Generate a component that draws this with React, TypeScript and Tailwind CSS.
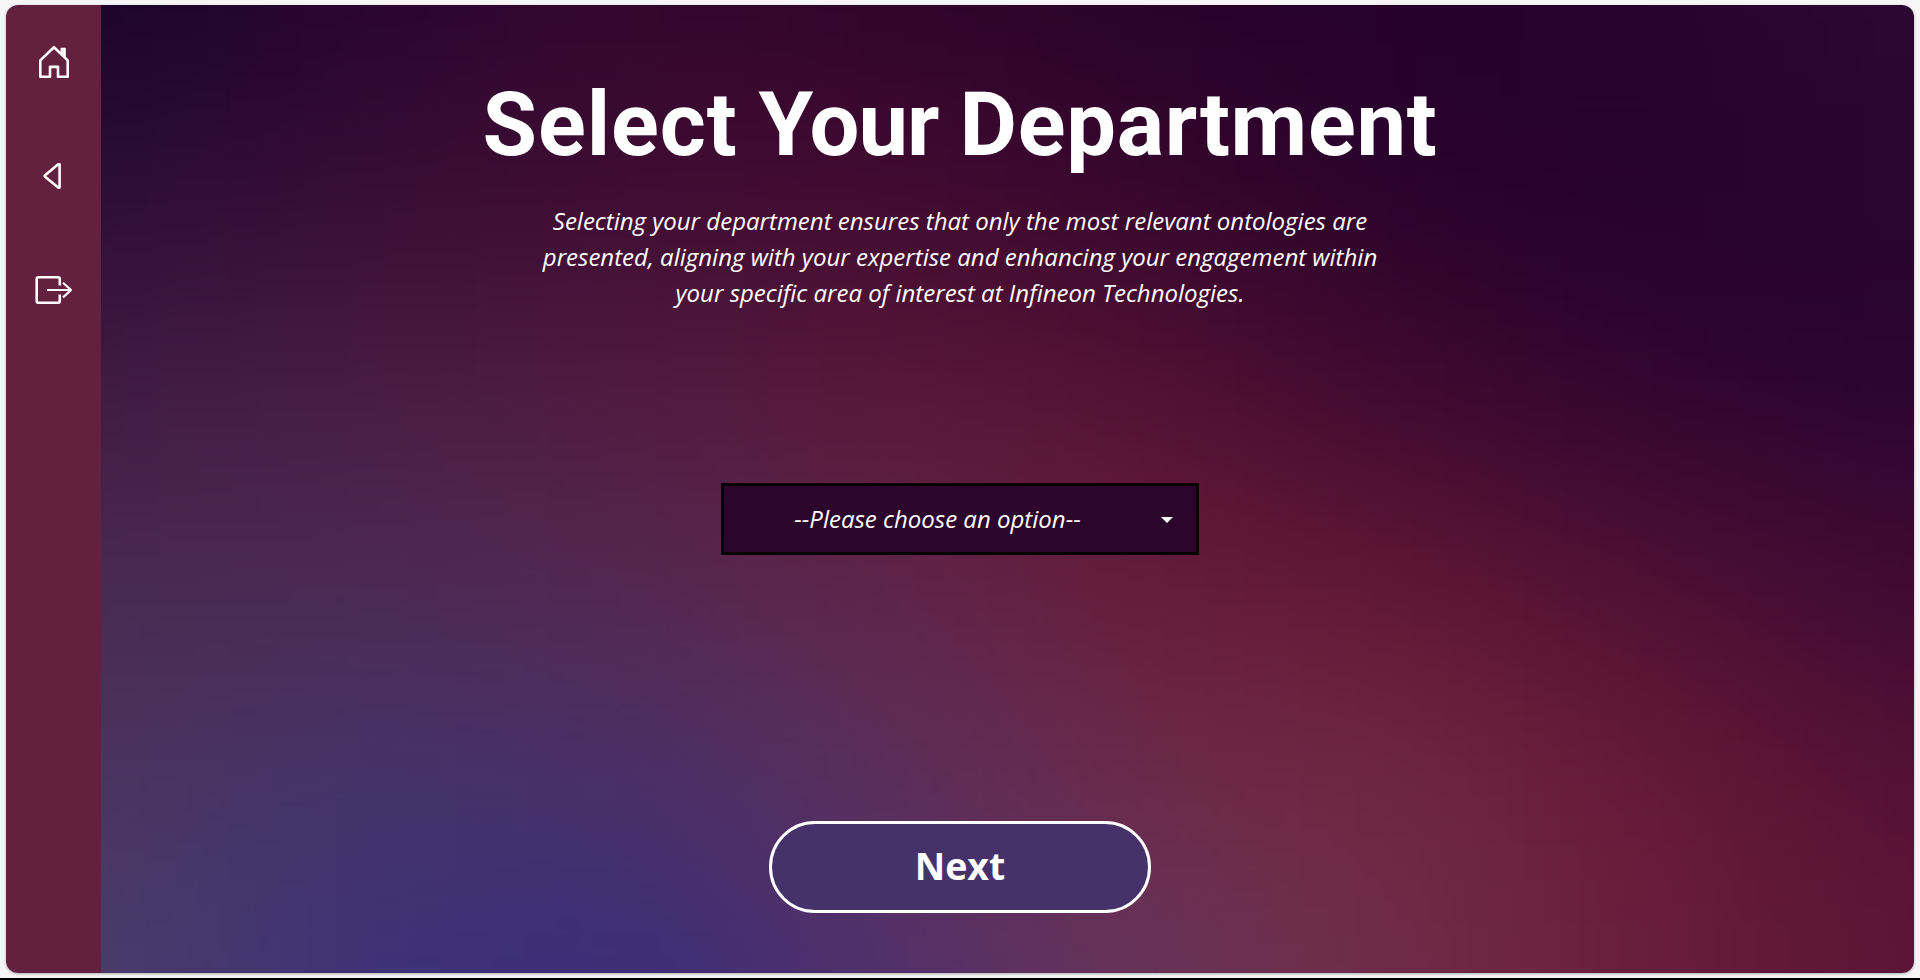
const meshColors = [
  ['#1a0329', '#29052f', '#33062f', '#31042c', '#28032b', '#25012b', '#26032c', '#2c0a33'],
  ['#2d0e36', '#380d35', '#400c33', '#430b31', '#38062d', '#2a022c', '#26022d', '#28042e'],
  ['#401b42', '#491d45', '#511b3f', '#591839', '#551233', '#3f092f', '#300530', '#2b0531'],
  ['#4a2a50', '#4c2a54', '#542851', '#60254a', '#671d3b', '#621735', '#4f1033', '#3e0933'],
  ['#4b345f', '#44346a', '#483069', '#5a305c', '#6d2a4a', '#702840', '#661937', '#531134'],
  ['#4b3d6a', '#3d3279', '#382d7b', '#50306d', '#67345a', '#702d48', '#691e3b', '#5b1537'],
]
const cellW = 259
const cellH = 193.6
const clamp = (n: number, max: number) => Math.max(0, Math.min(max, n))

function MeshBackground() {
  const cells = []
  for (let r = -2; r < 8; r++) {
    for (let c = -2; c < 10; c++) {
      cells.push(
        <rect
          key={`${r}:${c}`}
          x={(c - 0.5) * cellW}
          y={(r - 0.5) * cellH}
          width={cellW + 1}
          height={cellH + 1}
          fill={meshColors[clamp(r, 5)][clamp(c, 7)]}
        />,
      )
    }
  }
  return (
    <svg className="absolute inset-0 h-full w-full" viewBox="0 0 1813 968" preserveAspectRatio="none" aria-hidden="true">
      <defs>
        <filter id="mesh" filterUnits="userSpaceOnUse" x="-600" y="-500" width="3013" height="1968" colorInterpolationFilters="sRGB">
          <feGaussianBlur stdDeviation="115 88" />
        </filter>
      </defs>
      <g filter="url(#mesh)">{cells}</g>
    </svg>
  )
}

function HomeIcon() {
  return (
    <svg className="h-10 w-10" viewBox="0 0 40 40" fill="none" stroke="white" strokeWidth="2.6" strokeLinejoin="round">
      <path d="M20 5.2 6.3 18.4V34.7H16V24.9h8v9.8h9.7V18.4Z" />
      <path d="M27.2 11V6.4h3.9v9.2Z" fill="white" strokeWidth="1.4" />
    </svg>
  )
}

function BackIcon() {
  return (
    <svg className="h-10 w-10" viewBox="0 0 40 40" fill="none" stroke="white" strokeWidth="2.6" strokeLinejoin="round">
      <path d="M25.6 8.2v23.4h-1.4L10.8 20.6v-1.2L24.2 8.2Z" />
    </svg>
  )
}

function LogoutIcon() {
  return (
    <svg className="h-10 w-10" viewBox="0 0 40 40" fill="none" stroke="white" strokeWidth="2.6" strokeLinejoin="round">
      <path d="M25.8 15.5V9q0-1.8-1.8-1.8H4.5Q2.7 7.2 2.7 9v22q0 1.8 1.8 1.8H24q1.8 0 1.8-1.8v-6.5" />
      <path d="M13 20h24M29 12.7 37 20l-8 7.4" strokeWidth="2.2" />
    </svg>
  )
}

export default function App() {
  return (
    <div className="h-[980px] w-[1920px] overflow-hidden border-b-2 border-black bg-[#f6f6f6] px-1.5 pt-[5px]">
      <div className="flex h-[968px] w-[1908px] overflow-hidden rounded-xl shadow-[0_1px_3px_rgba(0,0,0,0.3)]">
        <nav className="flex w-[95px] shrink-0 flex-col items-center gap-[74px] bg-[#64203f] pt-[37px]">
          <button aria-label="Home"><HomeIcon /></button>
          <button aria-label="Back"><BackIcon /></button>
          <button aria-label="Log out"><LogoutIcon /></button>
        </nav>
        <main className="relative flex-1 overflow-hidden">
          <MeshBackground />
          <div className="relative flex h-full flex-col items-center pr-[95px] text-white">
            <h1 className="mt-[66px] flex h-[108px] gap-[21px] whitespace-nowrap font-['Roboto',sans-serif] text-[88.5px] leading-[108px] font-bold">
              <span className="tracking-[0.9px]">Select</span>
              <span className="tracking-[-1px]">Your</span>
              <span className="tracking-[0.7px]">Department</span>
            </h1>
            <p className="mt-6 text-center font-['Open_Sans',sans-serif] text-2xl leading-9 font-medium whitespace-nowrap italic">
              Selecting your department ensures that only the most relevant ontologies are
              <br />
              presented, aligning with your expertise and enhancing your engagement within
              <br />
              your specific area of interest at Infineon Technologies.
            </p>
            <button className="mt-[172px] flex h-[72px] w-[478px] items-center border-[3px] border-black bg-[#2b052c] pr-[23px] pl-[2px] font-['Open_Sans',sans-serif] text-2xl font-medium italic">
              <span className="flex-1 pr-3 text-center">--Please choose an option--</span>
              <svg className="mt-0.5 h-1.5 w-3" viewBox="0 0 12 6" fill="white"><path d="M0 0h12L6 6Z" /></svg>
            </button>
            <button className="mt-[266px] h-[92px] w-[382px] rounded-full border-[3px] border-white bg-[#46326b] pb-0.5 font-['Open_Sans',sans-serif] text-[37.5px] font-bold">
              Next
            </button>
          </div>
        </main>
      </div>
    </div>
  )
}
